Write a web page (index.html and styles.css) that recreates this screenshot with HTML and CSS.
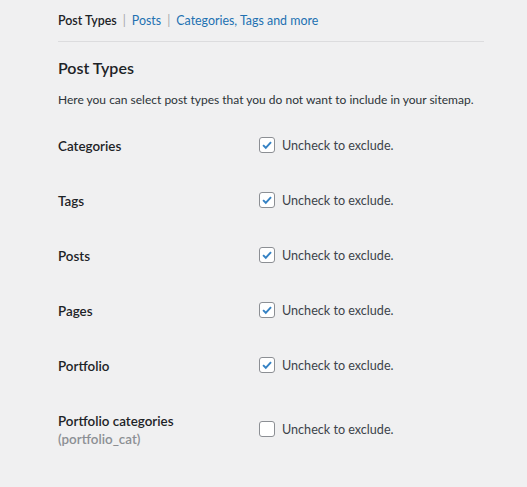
FILE: index.html
```html
<!DOCTYPE html>
<html lang="en">
<head>
<meta charset="utf-8">
<title>Sitemap settings</title>
<link rel="stylesheet" href="styles.css">
</head>
<body>
<div class="wrap">
  <nav class="tabs">
    <span class="current">Post Types</span>
    <span class="sep">|</span>
    <a href="#">Posts</a>
    <span class="sep">|</span>
    <a href="#">Categories, Tags and more</a>
  </nav>
  <h2 class="title">Post Types</h2>
  <p class="desc">Here you can select post types that you do not want to include in your sitemap.</p>
  <div class="table">
    <div class="row">
      <div class="label">Categories</div>
      <label class="field"><span class="cb checked"><svg viewBox="0 0 16 16"><path d="M3.5 8.2 L6.6 11.2 L12.6 4.6"/></svg></span>Uncheck to exclude.</label>
    </div>
    <div class="row">
      <div class="label">Tags</div>
      <label class="field"><span class="cb checked"><svg viewBox="0 0 16 16"><path d="M3.5 8.2 L6.6 11.2 L12.6 4.6"/></svg></span>Uncheck to exclude.</label>
    </div>
    <div class="row">
      <div class="label">Posts</div>
      <label class="field"><span class="cb checked"><svg viewBox="0 0 16 16"><path d="M3.5 8.2 L6.6 11.2 L12.6 4.6"/></svg></span>Uncheck to exclude.</label>
    </div>
    <div class="row">
      <div class="label">Pages</div>
      <label class="field"><span class="cb checked"><svg viewBox="0 0 16 16"><path d="M3.5 8.2 L6.6 11.2 L12.6 4.6"/></svg></span>Uncheck to exclude.</label>
    </div>
    <div class="row">
      <div class="label">Portfolio</div>
      <label class="field"><span class="cb checked"><svg viewBox="0 0 16 16"><path d="M3.5 8.2 L6.6 11.2 L12.6 4.6"/></svg></span>Uncheck to exclude.</label>
    </div>
    <div class="row">
      <div class="label">Portfolio categories<span class="sub">(portfolio_cat)</span></div>
      <label class="field"><span class="cb"></span>Uncheck to exclude.</label>
    </div>
  </div>
</div>
</body>
</html>
```
FILE: styles.css
```css
html, body {
  margin: 0;
  padding: 0;
  background: #f0f0f1;
}
body {
  font-family: Lato, "Open Sans", sans-serif;
  color: #3c434a;
}
.wrap {
  width: 426px;
  padding-left: 58px;
}
.tabs {
  padding: 12px 0 11px;
  line-height: 18px;
  font-size: 12.4px;
  border-bottom: 1px solid #dcdcde;
  display: flex;
  gap: 6px;
}
.tabs .current {
  color: #1d2327;
  font-weight: 600;
}
.tabs .sep {
  color: #a7aaad;
}
.tabs a {
  color: #2271b1;
  text-decoration: none;
}
.title {
  margin: 14px 0 0;
  font-size: 16px;
  line-height: 23px;
  font-weight: 600;
  color: #1d2327;
}
.desc {
  margin: 12px 0 0;
  font-size: 12px;
  line-height: 18px;
  white-space: nowrap;
  color: #2c3338;
}
.table {
  margin-top: 10px;
}
.row {
  display: grid;
  grid-template-columns: 201px 1fr;
  align-items: center;
  padding: 18px 0 19px;
}
.label {
  font-size: 13.4px;
  line-height: 18px;
  font-weight: 600;
  color: #1d2327;
}
.label .sub {
  display: block;
  font-weight: 600;
  color: #8c8f94;
}
.field {
  display: flex;
  align-items: center;
  gap: 7px;
  font-size: 12.6px;
  line-height: 18px;
  color: #3c434a;
}
.cb {
  width: 14px;
  height: 14px;
  border: 1px solid #8c8f94;
  border-radius: 3px;
  background: #fff;
  display: inline-block;
  position: relative;
  top: -1px;
}
.cb svg {
  width: 14px;
  height: 14px;
  display: block;
}
.cb svg path {
  fill: none;
  stroke: #3582c4;
  stroke-width: 2.2;
}
```
